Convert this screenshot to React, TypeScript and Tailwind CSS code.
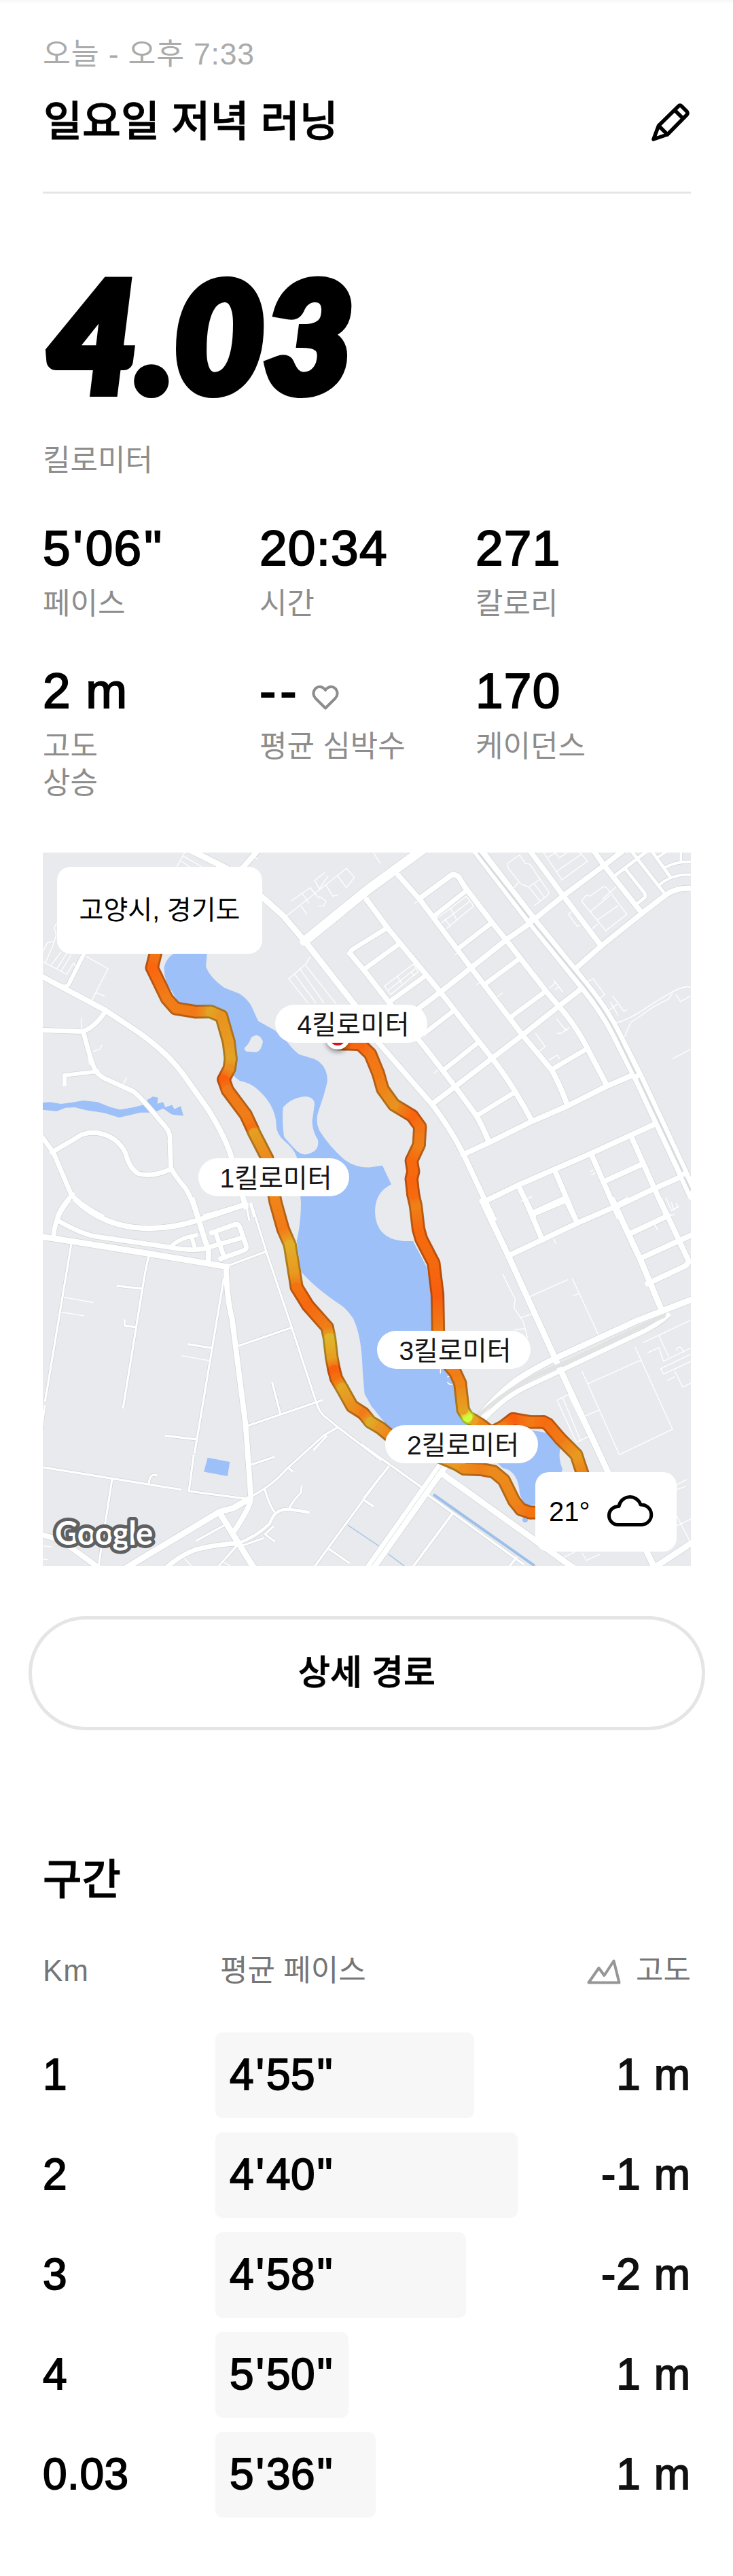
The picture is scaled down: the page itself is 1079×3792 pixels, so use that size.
const stats = [
  { value: `5'06"`, label: "페이스" },
  { value: "20:34", label: "시간" },
  { value: "271", label: "칼로리" },
  { value: "2 m", label: "고도\n상승" },
  { value: "--", label: "평균 심박수", heart: true },
  { value: "170", label: "케이던스" },
];

const splits = [
  { km: "1", pace: `4'55"`, elevation: "1 m", width: 381 },
  { km: "2", pace: `4'40"`, elevation: "-1 m", width: 445 },
  { km: "3", pace: `4'58"`, elevation: "-2 m", width: 369 },
  { km: "4", pace: `5'50"`, elevation: "1 m", width: 196 },
  { km: "0.03", pace: `5'36"`, elevation: "1 m", width: 236 },
];

// [x, y, colour] along the run; the colour is the pace at that point
type RoutePoint = [number, number, string];

const route: RoutePoint[] = [
  [168, 140, "#ec7d1a"],
  [160.7, 169.6, "#f9660f"],
  [182.7, 215, "#f07d18"],
  [195.3, 229.3, "#f07d18"],
  [225.3, 234.3, "#f27a16"],
  [247, 234, "#e3a325"],
  [263, 241, "#e89420"],
  [273.7, 278.6, "#e89a22"],
  [276.7, 303.6, "#e2a327"],
  [274.7, 317.9, "#ea8f1e"],
  [266.3, 334, "#fa5f0e"],
  [272, 350, "#f07a18"],
  [298.7, 385.7, "#f07d18"],
  [308, 405.4, "#f47213"],
  [311, 412.5, "#e59d22"],
  [330.3, 450, "#ec8a1c"],
  [342.7, 515, "#f08418"],
  [353.7, 554.3, "#f37a16"],
  [363.7, 577.5, "#e2ae28"],
  [370.3, 618.6, "#e99a20"],
  [373.7, 640, "#f4730f"],
  [390.3, 666.8, "#f76810"],
  [418.7, 698.9, "#ee7f18"],
  [422, 715, "#e0b52a"],
  [425.3, 743.6, "#e6a022"],
  [428.7, 761.4, "#f9600e"],
  [432, 774, "#f4700f"],
  [440.3, 788.2, "#e3a524"],
  [455.3, 815, "#ea901e"],
  [472, 825.7, "#f27a18"],
  [482, 838.2, "#dfaa28"],
  [497, 847, "#e99320"],
  [510.3, 858, "#ef8618"],
  [610, 900.7, "#e99a20"],
  [620.3, 907.1, "#ec8c1c"],
  [645.3, 907.9, "#f08018"],
  [663.7, 911.4, "#ec8a1c"],
  [678.7, 923.9, "#ec8a1c"],
  [693.7, 954.3, "#ee8519"],
  [703.7, 966.8, "#f07d18"],
  [717, 971.4, "#f4730f"],
  [760, 971.4, "#f4730f"],
  [800, 930, "#ee8519"],
  [793.7, 912.1, "#ee8519"],
  [785.3, 886.4, "#e89a20"],
  [762, 863.2, "#f27a16"],
  [743.7, 841.8, "#f57012"],
  [737, 838.2, "#f66c10"],
  [717, 838.2, "#f27a16"],
  [692, 833.9, "#f9600e"],
  [677, 845.4, "#f07d18"],
  [660, 854, "#f07d18"],
  [643.7, 841.8, "#ee8519"],
  [633.7, 835.7, "#e6a022"],
  [625.3, 831, "#d0ff3c"],
  [618.7, 820.4, "#e6a022"],
  [614.3, 781, "#ee8519"],
  [607, 765, "#f07d18"],
  [590, 745, "#f07d18"],
  [582, 704.3, "#f07d18"],
  [581, 650.7, "#f85e0e"],
  [575.3, 604.3, "#f4690f"],
  [557, 568.6, "#f6690f"],
  [553, 554.3, "#f6690f"],
  [549, 520, "#ef8018"],
  [545.3, 503.6, "#f66a10"],
  [542.7, 480.4, "#f9640f"],
  [545.3, 469.6, "#f6690f"],
  [542.7, 453.6, "#f6690f"],
  [553.7, 430.4, "#ef8018"],
  [555.3, 403.6, "#f37416"],
  [543.7, 387.5, "#f8640f"],
  [517, 371.4, "#e8921f"],
  [500.3, 348.2, "#ee8519"],
  [493.7, 325, "#f27a16"],
  [482, 296.4, "#f37616"],
  [467, 282, "#f9640f"],
  [434, 281, "#f4730f"],
];

type Road = { w: number; d: string };
type Sheet = { transform: string; roads: Road[]; paths: string };

// The base map is split into four sheets, each drawn on its own grid
const sheets: Sheet[] = [
  {
    transform: "translate(-23 -25) scale(0.33333 0.35714)",
    roads: [
      { w: 9, d: "M720 60L880 135L1040 255L1130 330L1230 440L1440 690L1560 830" },
      { w: 8, d: "M1020 60L950 135" },
      { w: 8, d: "M60 578L345 720L490 810Q620 895 690 985L800 1130Q880 1250 905 1335L965 1530" },
      { w: 6, d: "M255 480L190 600Q180 630 150 620M310 972L165 988L165 1025M785 1568L965 1520" },
      { w: 7, d: "M345 725Q300 790 245 808L60 802" },
      { w: 7, d: "M248 808Q270 890 290 945Q305 985 340 1000L470 1055Q500 1075 610 1200Q635 1225 630 1260L635 1370Q650 1400 700 1455Q730 1500 755 1580" },
      { w: 7, d: "M635 1375Q550 1410 490 1393Q450 1370 435 1310Q400 1240 310 1225Q250 1220 210 1250L110 1305" },
      { w: 7, d: "M60 1235L115 1305L195 1480Q230 1520 330 1570M200 1480Q150 1530 135 1570" },
      { w: 3, d: "M985 1520L1000 1568" },
    ],
    paths:
      "M240 750Q235 790 248 808M290 890L320 880L332 862M440 995L425 1025M268 900L275 945M60 515L175 572L205 525L215 540M60 495L90 440L122 437M130 360L120 380L128 410L115 450L80 525M150 480L105 535M175 485L130 550M195 490L150 560M260 498L357 548L285 680M305 648L342 662M695 70L660 130M690 85L770 128M680 105L720 130M1250 500L1230 530L1155 590L1240 690M1180 570L1275 690M1205 550L1310 690M1230 535L1365 695M1140 335L1410 135L1445 172L1410 215L1370 165M1165 270L1250 215L1290 260M1215 240L1245 280M1315 152L1270 185L1290 220L1330 165M1320 205L1350 250L1372 245M1285 290L1310 290L1320 270L1290 250M1210 290L1235 325M1000 85L1018 98",
  },
  {
    transform: "translate(477 -25) scale(0.33333 0.35714)",
    roads: [
      { w: 14, d: "M-275 435L0 226L250 55" },
      { w: 17, d: "M490 60L728 350L965 625Q1060 735 1110 835L1200 1000L1400 1400L1440 1480" },
      { w: 8, d: "M718 60L865 245L1035 455M1000 60L1045 120L1215 320" },
      { w: 8, d: "M925 545L1035 455L1215 320L1320 245Q1370 212 1440 218M740 345L865 250L1045 125L1135 60" },
      { w: 5, d: "M1095 165L1230 70M1165 60L1320 245M1255 60L1340 170M1195 280L1228 255Q1232 245 1225 235L1140 135" },
      { w: 4, d: "M1320 130Q1370 105 1440 108M1290 205Q1350 155 1440 162M1387 60L1387 105M1285 90L1320 68" },
      { w: 8, d: "M140 165L235 265L460 545L690 825L815 965Q850 1020 885 1110" },
      { w: 8, d: "M235 258L370 165Q385 155 405 170L435 215L550 355L615 430L790 640L850 705Q920 780 970 870L1060 1030" },
      { w: 7, d: "M300 330L435 230M405 465L548 362M525 610L670 510M640 745L785 645" },
      { w: 8, d: "M225 715L325 645L460 545L615 430L715 365M290 1105L390 1035L550 920L690 820L845 705L935 640" },
      { w: 8, d: "M0 265L95 385L325 645L550 915Q640 1020 725 1170" },
      { w: 8, d: "M-75 485L0 570L100 690L270 890L390 1035L480 1150Q510 1195 540 1265" },
      { w: 7, d: "M90 380L-65 470Q-78 480 -70 490M-10 550L145 445M100 685L255 580M255 815L385 720M340 965L490 855M485 1155L650 1060M815 965L970 880" },
      { w: 8, d: "M20 820L290 1110Q370 1210 425 1310L520 1500L560 1580" },
      { w: 8, d: "M425 1315L540 1265L725 1180L885 1115L1055 1035L1180 985" },
      { w: 8, d: "M515 1510L670 1440L830 1375L990 1310L1165 1235L1270 1190" },
      { w: 8, d: "M1165 1235L1270 1455L1325 1568M990 1310L1110 1568M830 1380L915 1568M670 1445L735 1568" },
      { w: 8, d: "M1050 1425L1215 1355M1100 1530L1270 1455L1390 1405M735 1560L885 1500" },
    ],
    paths:
      "M620 115L675 80L700 115L720 118L765 180L805 235L800 245L738 290M620 115L625 135L680 200L715 212L765 270M715 212L765 180M650 215L672 190M740 200L785 255M780 70L860 180M800 90L835 70M830 70L850 92L885 70M940 70L975 105L858 185M835 150L950 75M948 270L970 245L985 250L1045 210L1060 215L1148 325L1055 392L948 270M985 315L1075 245M1015 350L1110 288M990 388L1020 365M1040 262L1100 212M905 312L890 325L930 375L942 368M310 340L440 250L472 290L350 385M330 360L455 270M370 300L395 345M345 345L370 375M78 620L205 530L228 560L105 655ZM92 640L215 548M135 580L155 612M195 560L210 580M825 595L865 645M805 630L835 605M830 635L850 622M575 665L600 648M975 602L1000 590L1050 655L1030 670M1085 660L1135 725L1150 718M1070 720L1105 695M1075 685L1110 742M1100 770Q1130 770 1210 725Q1300 670 1330 655Q1400 615 1431 625M1138 830L1165 770L1215 740Q1250 710 1330 675L1350 650M1365 655L1385 685L1431 660M1350 920L1431 880M745 815L787 870L760 890M838 755L880 805L895 790M838 812Q860 825 880 795M805 925L840 905L852 920M295 980L315 965M680 1508L730 1488M988 1385L1005 1378M990 1400L1010 1390M1320 1490L1345 1545L1375 1530L1365 1515M30 72L60 115M210 280L225 270M388 492L402 482M485 615L500 605",
  },
  {
    transform: "translate(-23 515) scale(0.33333 0.35714)",
    roads: [
      { w: 9, d: "M60 142L115 148L530 210L880 265" },
      { w: 7, d: "M180 -5Q120 60 115 150M135 75Q240 130 300 140L630 185Q750 205 800 185L940 148" },
      { w: 8, d: "M215 -10Q290 60 400 90Q560 130 750 75L965 8" },
      { w: 6, d: "M635 185Q660 150 745 135M725 140L740 185" },
      { w: 8, d: "M730 -10L790 170L800 190L800 250" },
      { w: 7, d: "M815 125L920 90Q935 88 940 105L968 180Q970 195 950 200L855 232M830 120L870 225" },
      { w: 8, d: "M878 265Q882 400 905 480L965 920L988 1215Q990 1250 910 1360" },
      { w: 9, d: "M430 1510L850 1275L910 1260L985 1220M850 1280L1000 1505" },
      { w: 7, d: "M610 1510Q680 1450 750 1430Q830 1410 930 1405" },
      { w: 4.5, d: "M930 1405Q1010 1380 1070 1325Q1085 1290 1100 1280Q1120 1262 1160 1265L1240 1277" },
      { w: 8, d: "M60 1370Q130 1380 190 1420L315 1505" },
      { w: 3.2, d: "M195 170L80 815M77 840L60 960M537 225Q525 260 510 350L424 845M400 345L508 355M480 515L430 507L430 487M868 315L740 1030M735 1045L714 1190L970 1222M715 585L812 600M614 962L748 977M60 1090L675 1183M375 1140L315 1500M537 1162Q540 1115 570 1125" },
      { w: 3.2, d: "M885 262L1055 202M990 5L1055 200L1170 520L1275 820Q1290 870 1325 890L1370 925L1560 1060M930 592L1168 516M970 922L1300 816M1083 745L1118 872M985 1082L1088 1050M990 1212Q1080 1170 1150 1095L1310 960L1370 928M1320 965L1268 1018M1050 1185Q1070 1250 1095 1280M1212 1172L1210 1195Q1160 1245 1158 1265" },
      { w: 3.2, d: "M750 1393L875 1328M950 1415Q1010 1395 1040 1385M1090 1395L1050 1368L1085 1338M845 1500L930 1410M1560 1130L1270 1500M1485 1225L1525 1250M1328 1425L1420 1485M965 0L980 70M1155 1095L1170 1107" },
    ],
    paths:
      "M160 390L292 413M148 452L252 467M680 632L803 652M60 1415L108 1420M60 1470L92 1472M695 1468L725 1498M865 1480L895 1498",
  },
  {
    transform: "translate(477 515) scale(0.33333 0.35714)",
    roads: [
      { w: 9, d: "M510 -5L625 220L830 640L1065 1112L1270 1505L1440 1400" },
      { w: 8, d: "M625 220L930 85L1090 20L1150 -10M880 -10L930 85M700 -10L775 155M730 45L870 -15" },
      { w: 9, d: "M1085 -10L1210 240L1300 440" },
      { w: 8, d: "M1295 -10L1418 235Q1425 250 1405 262L1240 335M1160 130L1330 55M1210 230L1440 132" },
      { w: 9, d: "M490 890Q600 765 700 710Q760 675 850 635L1200 485L1440 398" },
      { w: 7, d: "M500 910Q600 805 700 762L1230 528Q1290 500 1330 465" },
      { w: 16, d: "M340 1080L10 1515" },
      { w: 9, d: "M335 1120L560 1270L910 1505" },
      { w: 3.5, d: "M-20 1000L250 1180M275 1210L380 1280L690 1490M95 1090L-10 1215M380 1280L205 1500M660 1465L630 1500M0 1235L25 1250" },
    ],
    paths:
      "M600 295L655 400L650 435L690 490L710 560M680 475L730 460M715 390L888 318M907 313L1025 550M910 385L938 375M652 525L700 520M950 695L1115 1040L1350 935L1185 597M975 748L1210 650M890 792L980 965L925 988L840 815ZM865 805L945 985M965 880L1020 858M1220 578L1431 485M1290 550L1335 640M1240 620L1290 598L1310 655L1431 600M1365 610Q1375 590 1390 600L1400 620M1431 625L1298 685L1310 708L1431 655M1360 695L1395 762L1431 745M1325 735L1360 718M1365 1165L1413 1142M1365 1185L1410 1170M1365 1285L1431 1405M1365 1335L1431 1305M865 1465L920 1440M950 1445L970 1475L1030 1450M1270 90L1285 115M825 150L835 170M1330 60L1360 48M1345 0L1355 30L1378 15M325 705L325 680M355 720L375 712M355 740Q365 755 380 748",
  },
];

function BaseMap() {
  return (
    <svg
      viewBox="0 0 954 1050"
      className="block h-[1050px] w-[954px]"
      fill="none"
      strokeLinejoin="round"
    >
      <rect width="954" height="1050" fill="#e8eaed" />

      {/* water */}
      <g fill="#9dc0f9">
        <path d="M242 146L240 168Q246 184 267 199Q280 204 290 208Q303 217 308 228L317 248L342 262L360 279Q366 288 377 297L400 304Q420 314 418.7 338L413.7 357L405.3 382Q401 396 407 409Q422 433 443.7 451.8Q460 464 480 463.6L500 460.7L513 488.6Q489 500 489 529Q490 568 530 572L545 572L565 610L573.7 658L575 704L605 783L610 818L627 840L657 854L640 880L513.7 852L483.7 815L473.7 797Q471 770 470 747Q468 710 457 686Q447 671 437 665Q400 640 380.3 617L373.7 572Q380 545 380 515L373.7 448Q370 436 355 424Q343 413 343.7 400Q342 370 313.7 346.4Q302 338 290 336Q278 328 277 321L275 296L262 245L247 234L200 222L190 204Q178 190 178.7 168Q182 154 197 146Z" />
        <path d="M660 890L677 906Q700 910 702 944Q706 956 712 961L745 958L765 908Q758 890 762 876L745 855L718 850Z" />
        <circle cx="710" cy="982" r="4" />
        <g transform="translate(-23 -25) scale(0.33333 0.35714)">
          <path d="M60 1102L100 1098L150 1106L200 1100L250 1092L310 1098L370 1120L410 1130L470 1120L530 1105L530 1090L555 1076L578 1080L575 1105L600 1098L610 1120L640 1110L650 1128L678 1115L690 1155L640 1150L600 1125L560 1142L500 1142L440 1155L405 1162L340 1143L260 1132L210 1120L170 1122L130 1136L60 1130Z" />
        </g>
        <path d="M242.7 890.7L275.3 897L272 918L237 911.4Z" />
      </g>
      <g fill="#e8eaed">
        <path d="M297 287Q303 283 307 272Q318 264 324 278Q322 292 314 294L300 293Q296 291 297 287Z" />
        <path d="M353.7 375Q367 360 387 359Q400 360 400 371L396.5 396Q397 410 405 423Q407 438 395 442Q384 448 373.7 439Q360 425 355 418Q352 396 353.7 375Z" />
      </g>

      {sheets.map((sheet) => (
        <g key={sheet.transform} transform={sheet.transform} stroke="#d0d3d8">
          {sheet.roads.map((road) => (
            <path key={road.d} d={road.d} strokeWidth={road.w + 1.4} vectorEffect="non-scaling-stroke" />
          ))}
        </g>
      ))}
      {sheets.map((sheet) => (
        <g key={sheet.transform} transform={sheet.transform} stroke="#fff">
          <path d={sheet.paths} strokeWidth={1.3} vectorEffect="non-scaling-stroke" />
          {sheet.roads.map((road) => (
            <path key={road.d} d={road.d} strokeWidth={road.w} strokeLinecap="round" vectorEffect="non-scaling-stroke" />
          ))}
        </g>
      ))}

      {/* railway and bridge deck */}
      <path
        d="M641 0L716 96M722 104L799 198Q830 237 847 273L873 326M877 332L942 470M944 477L954 498"
        stroke="#d9dcdf"
        strokeWidth="3"
      />
      <path d="M641 829Q677 797 712 777Q735 765 777 748L880 698L914 682" stroke="#e2e2e3" strokeWidth="6" strokeLinecap="round" />
      <path d="M588 902L484 1050" stroke="#d9dcdf" strokeWidth="1" />

      {/* canal */}
      <path d="M575 945L724 1050" stroke="#9dc0e9" strokeWidth="4" />
      <path d="M449 990L495 1021M509 1033L532 1050" stroke="#9dc0e9" strokeWidth="1.3" />
    </svg>
  );
}

function RouteLine() {
  const segments = route.slice(1).map((point, i) => ({ from: route[i], to: point }));
  const outline = route.map(([x, y]) => `${x},${y}`).join(" ");

  return (
    <svg
      viewBox="0 0 954 1050"
      className="absolute inset-0 h-[1050px] w-[954px]"
      fill="none"
      strokeLinecap="round"
      strokeLinejoin="round"
    >
      <defs>
        {segments.map(({ from, to }, i) => (
          <linearGradient
            key={i}
            id={`pace-${i}`}
            gradientUnits="userSpaceOnUse"
            x1={from[0]}
            y1={from[1]}
            x2={to[0]}
            y2={to[1]}
          >
            <stop offset="0" stopColor={from[2]} />
            <stop offset="1" stopColor={to[2]} />
          </linearGradient>
        ))}
      </defs>
      {segments.map(({ from, to }, i) => (
        <path key={i} d={`M${from[0]} ${from[1]}L${to[0]} ${to[1]}`} stroke={`url(#pace-${i})`} strokeWidth="20" />
      ))}
      <polyline points={outline} stroke="#000" strokeOpacity="0.24" strokeWidth="20.5" />
      {segments.map(({ from, to }, i) => (
        <path key={i} d={`M${from[0]} ${from[1]}L${to[0]} ${to[1]}`} stroke={`url(#pace-${i})`} strokeWidth="14.5" />
      ))}
      <circle cx="434" cy="276" r="18" fill="#000" fillOpacity="0.35" className="blur-[3px]" />
      <circle cx="434" cy="272" r="18" fill="#fff" />
      <circle cx="434" cy="272" r="12" fill="#d3131a" />
      <text
        x="18"
        y="1019"
        fontSize="47"
        fontWeight="700"
        textLength="144"
        fill="#fff"
        stroke="#5f6062"
        strokeWidth="10"
        paintOrder="stroke"
        className="font-[Lato,sans-serif]"
      >
        Google
      </text>
    </svg>
  );
}

function RunMap() {
  return (
    <div className="relative mt-[75px] h-[1050px] w-[954px] overflow-hidden">
      <BaseMap />
      <RouteLine />

      <div className="absolute left-[342px] top-[224px] flex h-14 w-56 items-center justify-center rounded-full bg-white pl-1.5 pt-1 text-[39px] text-[#151515]">
        4킬로미터
      </div>
      <div className="absolute left-[229px] top-[450px] flex h-14 w-[222px] items-center justify-center rounded-full bg-white pl-1.5 pt-1 text-[39px] text-[#151515]">
        1킬로미터
      </div>
      <div className="absolute left-[492px] top-[704px] flex h-14 w-[226px] items-center justify-center rounded-full bg-white pl-1 pt-1 text-[39px] text-[#151515]">
        3킬로미터
      </div>
      <div className="absolute left-[504px] top-[843px] flex h-14 w-[225px] items-center justify-center rounded-full bg-white pl-1 pt-1 text-[39px] text-[#151515]">
        2킬로미터
      </div>

      <div className="absolute left-[21px] top-[21px] flex h-32 w-[302px] items-center justify-center rounded-[20px] bg-white text-[39px]">
        고양시, 경기도
      </div>
      <div className="absolute left-[725px] top-[912px] flex h-[117px] w-[208px] items-center rounded-[20px] bg-white pl-5 text-[40px]">
        <span className="pb-0.5">21°</span>
        <svg
          width="70"
          height="50"
          viewBox="0 0 70 50"
          fill="none"
          stroke="currentColor"
          strokeWidth="5"
          strokeLinejoin="round"
          className="mb-1.5 ml-6"
        >
          <path d="M16 46.5A13.5 13.5 0 0 1 18 19.5A16.5 16.5 0 0 1 50 17A14.7 14.7 0 0 1 52 46.5Z" />
        </svg>
      </div>
    </div>
  );
}

// Digits are set slightly wider around the minute and second marks
function Pace({ value }: { value: string }) {
  return (
    <>
      {value.split("").map((char, i) => (
        <span key={i} className={char === "'" || char === '"' ? "mx-[0.04em]" : ""}>
          {char}
        </span>
      ))}
    </>
  );
}

export default function App() {
  return (
    <div className='min-h-[3792px] w-[1079px] bg-white pl-[63px] pr-[62px] font-["Liberation_Sans","Noto_Sans_CJK_KR",sans-serif] text-black'>
      <div className="-ml-[63px] -mr-[62px] h-1.5 bg-linear-to-b from-[#f7f7f7] to-white" />

      <header>
        <p className="mt-[44px] text-[44.5px] leading-[60px] tracking-[0.8px] text-[#ababab]">오늘 - 오후 7:33</p>
        <div className="mt-[30px] flex h-20 items-center justify-between">
          <h1 className="pl-px text-[62px] font-medium leading-[80px] [-webkit-text-stroke:0.8px]">일요일 저녁 러닝</h1>
          <svg
            width="56"
            height="56"
            viewBox="0 0 56 56"
            fill="none"
            stroke="currentColor"
            strokeWidth="5.5"
            strokeLinejoin="round"
            strokeLinecap="round"
            className="mr-0.5"
          >
            <path d="M3 53L10.5 33L39.5 4.5Q42 2 44.5 4.5L52 12Q54 14.5 52 17L23.5 46ZM34 10L46 22M10.5 33L23.5 46" />
          </svg>
        </div>
        <div className="mt-[62px] h-[3px] bg-[#e5e5e5]" />
      </header>

      <section>
        {/* svg text keeps the corners of the heavy digits sharp */}
        <svg width="480" height="180" viewBox="0 0 480 180" className="mt-[122px] block overflow-visible">
          <text
            x="7"
            y="170"
            textLength="450"
            lengthAdjust="spacingAndGlyphs"
            fontSize="223"
            fontWeight="900"
            fontStyle="italic"
            stroke="#000"
            strokeWidth="14"
            strokeLinejoin="miter"
            className="font-[Lato,sans-serif]"
          >
            4.03
          </text>
        </svg>
        <p className="mt-[61px] text-[44px] leading-[60px] text-[#8d8d8d]">킬로미터</p>

        <div className="mt-[59px] grid grid-cols-[319px_318px_1fr] gap-y-[61px]">
          {stats.map((stat) => (
            <div key={stat.label}>
              <div className="flex h-20 items-center whitespace-pre text-[73px] tracking-[1.2px] [-webkit-text-stroke:2px_black]">
                <span className={stat.heart ? "tracking-[6px]" : ""}>
                  <Pace value={stat.value} />
                </span>
                {stat.heart && (
                  <svg
                    width="40"
                    height="38"
                    viewBox="0 0 40 38"
                    fill="none"
                    stroke="#8d8d8d"
                    strokeWidth="4"
                    strokeLinejoin="round"
                    className="ml-4 mt-5"
                  >
                    <path d="M20 34.5L5.5 20C-1.5 12 5 3 11.5 3C15.5 3 18 5 20 8C22 5 24.5 3 28.5 3C35 3 41.5 12 34.5 20Z" />
                  </svg>
                )}
              </div>
              <p className="mt-[15px] whitespace-pre-line text-[44px] leading-[54px] text-[#8d8d8d]">{stat.label}</p>
            </div>
          ))}
        </div>
      </section>

      <RunMap />

      <button className="-ml-[21px] mt-[74px] block h-[168px] w-[996px] rounded-full border-[5px] border-[#e5e5e5] text-[51px] font-medium [-webkit-text-stroke:0.8px]">
        상세 경로
      </button>

      <section>
        <h2 className="mt-[180px] text-[62.5px] font-medium leading-[80px] [-webkit-text-stroke:0.8px]">구간</h2>
        <div className="mt-[64px] flex h-[60px] items-center text-[44px] text-[#757575]">
          <span className="w-[261px] tracking-[1px]">Km</span>
          <span className="flex-1">평균 페이스</span>
          <svg
            width="50"
            height="38"
            viewBox="0 0 50 38"
            fill="none"
            stroke="#969696"
            strokeWidth="4"
            strokeLinejoin="round"
            className="mr-[22px] mt-1"
          >
            <path d="M2.5 34.5L17.5 13L25.5 24L39.5 2.5L47.5 34.5Z" />
          </svg>
          <span>고도</span>
        </div>

        <div className="mt-[61px] flex flex-col gap-[21px]">
          {splits.map((split) => (
            <div key={split.km} className="flex h-[126px] items-center text-[64px] tracking-[0.5px] [-webkit-text-stroke:1.8px]">
              <span className="w-[254px] pb-0.5">{split.km}</span>
              <div
                className="flex h-full items-center rounded-[10px] bg-[#f7f7f7] pb-0.5 pl-[21px]"
                style={{ width: split.width }}
              >
                <Pace value={split.pace} />
              </div>
              <span className="ml-auto pb-0.5 tracking-[1px] text-[#111]">{split.elevation}</span>
            </div>
          ))}
        </div>
      </section>
    </div>
  );
}
